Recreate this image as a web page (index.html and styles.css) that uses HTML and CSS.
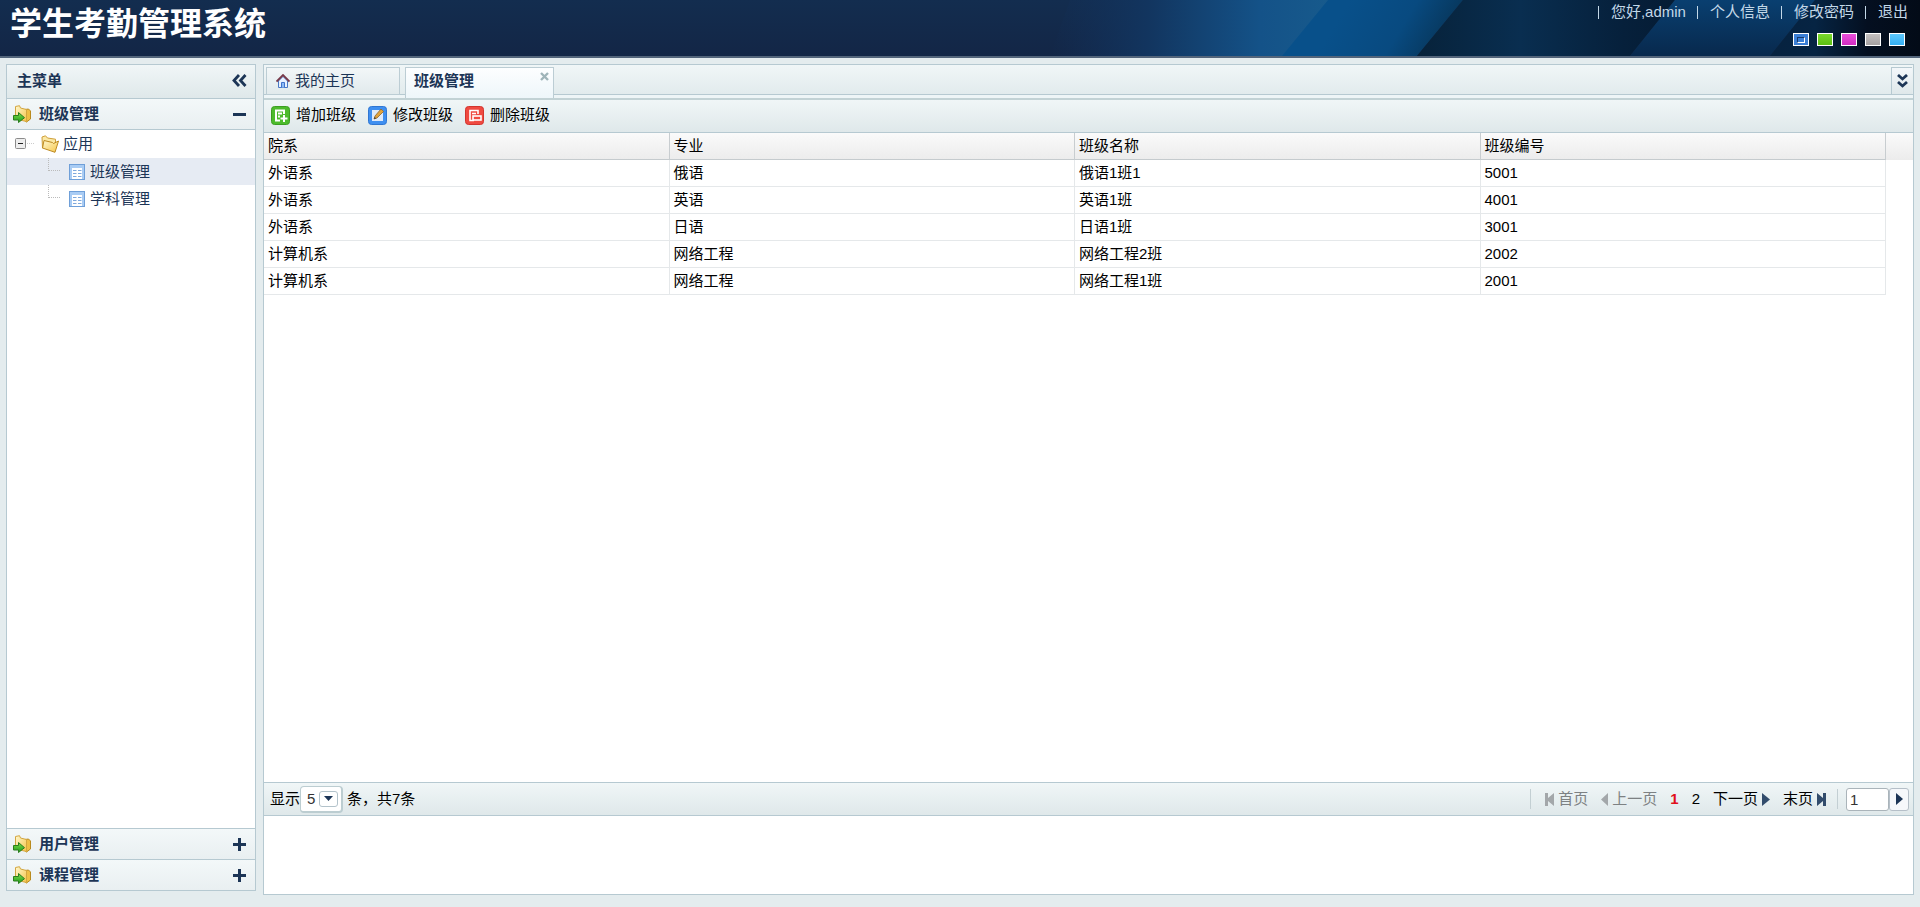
FILE: index.html
```html
<!DOCTYPE html>
<html lang="zh-CN">
<head>
<meta charset="utf-8">
<title>学生考勤管理系统</title>
<link rel="stylesheet" href="styles.css">
</head>
<body>
<svg class="sprite" aria-hidden="true">
  <defs>
    <linearGradient id="gold" x1="0" y1="0" x2="1" y2="1"><stop offset="0" stop-color="#fff8d0"/><stop offset="1" stop-color="#f6c64a"/></linearGradient>
    <linearGradient id="leaf" x1="0" y1="0" x2="0" y2="1"><stop offset="0" stop-color="#7ee04a"/><stop offset="1" stop-color="#1f9a1a"/></linearGradient>
    <symbol id="folder" viewBox="0 0 18 18">
      <path d="M1 2L4.500 .8L6.500 3L14.500 4.200V8L1.500 13Z" fill="#fbe9a6" stroke="#cf9f3a"/>
      <path d="M1.500 13L3 5.500L11.500 7.500L12.500 8.500L17.500 6L14 17.300Z" fill="url(#gold)" stroke="#bd8a22"/>
    </symbol>
    <symbol id="folder-go" viewBox="0 0 18 18">
      <path d="M12 4.500L15.500 4L17.500 6V14L13.500 17L11 15Z" fill="#f0bf45" stroke="#b98a1e"/>
      <path d="M2.500 1.500L6.500 .7L7.500 3L13.500 4.500V16.500L2.500 14Z" fill="url(#gold)" stroke="#d3a640"/>
      <path d="M.5 10.500H5.500V7.500L11.500 12.700L5.500 17.500V15H.5Z" fill="url(#leaf)" stroke="#2b7d1c"/>
    </symbol>
    <symbol id="grid" viewBox="0 0 16 16">
      <rect x=".5" y=".5" width="15" height="15" fill="#fff" stroke="#6f9fd8"/>
      <path d="M1 1H15V4H1ZM1 4H3V15H1ZM13 4H15V15H13Z" fill="#a9ccf4"/>
      <path d="M4 6.500H7.500M9 6.500H12.500M4 9.500H7.500M9 9.500H12.500M4 12.500H7.500M9 12.500H12.500" stroke="#7fa9dd"/>
    </symbol>
    <symbol id="plus" viewBox="0 0 13 13"><path d="M0 6.500H13M6.500 0V13" stroke="#1c3556" stroke-width="3"/></symbol>
  </defs>
</svg>

<header class="banner">
  <svg class="banner-art" viewBox="0 0 870 56" preserveAspectRatio="none" aria-hidden="true">
    <defs>
      <linearGradient id="b1"><stop offset="0" stop-color="#12305a" stop-opacity="0"/><stop offset=".35" stop-color="#12355f"/><stop offset=".75" stop-color="#145288"/><stop offset="1" stop-color="#175a8c"/></linearGradient>
      <linearGradient id="b2" gradientUnits="userSpaceOnUse" x1="300" y1="0" x2="400" y2="60"><stop offset="0" stop-color="#08508a"/><stop offset=".5" stop-color="#084a80"/><stop offset="1" stop-color="#07304f"/></linearGradient>
      <linearGradient id="b3"><stop offset="0" stop-color="#07223a"/><stop offset=".4" stop-color="#092e50"/><stop offset=".8" stop-color="#06203b"/><stop offset="1" stop-color="#051c34"/></linearGradient>
      <linearGradient id="b4" x1="0" y1="0" x2="0" y2="1"><stop offset="0" stop-color="#093f70"/><stop offset="1" stop-color="#08294d"/></linearGradient>
      <linearGradient id="b5"><stop offset="0" stop-color="#06223f"/><stop offset=".3" stop-color="#062443"/><stop offset=".65" stop-color="#040f20"/><stop offset="1" stop-color="#030b17"/></linearGradient>
    </defs>
    <path d="M20 0H280V56H0Z" fill="url(#b1)"/>
    <path d="M278 0H413L367 56H232Z" fill="url(#b2)"/>
    <path d="M413 0H625L580 56H367Z" fill="url(#b3)"/>
    <path d="M625 0H765L720 56H580Z" fill="url(#b4)"/>
    <path d="M765 0H870V56H720Z" fill="url(#b5)"/>
  </svg>
  <h1 class="banner-title">学生考勤管理系统</h1>
  <div class="banner-side">
    <nav class="links">
      <span>您好,admin</span>
      <a href="#">个人信息</a>
      <a href="#">修改密码</a>
      <a href="#">退出</a>
    </nav>
    <div class="skins">
      <button class="skin skin-blue" aria-label="蓝色"><i class="skin-mark"></i></button>
      <button class="skin skin-green" aria-label="绿色"></button>
      <button class="skin skin-pink" aria-label="粉色"></button>
      <button class="skin skin-gray" aria-label="灰色"></button>
      <button class="skin skin-sky" aria-label="天蓝"></button>
    </div>
  </div>
</header>

<div class="workspace">
  <aside class="sidebar">
    <div class="side-head">
      <h2>主菜单</h2>
      <button class="plain" aria-label="收起"><svg width="15" height="13" viewBox="0 0 15 13"><path d="M7 1L2 6.500L7 12M13.500 1L8.500 6.500L13.500 12" fill="none" stroke="#1c3556" stroke-width="2.800"/></svg></button>
    </div>
    <button class="fold fold-open"><svg class="i18"><use href="#folder-go"/></svg><span>班级管理</span><svg width="13" height="13" viewBox="0 0 13 13"><path d="M0 6.500H13" stroke="#1c3556" stroke-width="3"/></svg></button>
    <ul class="tree">
      <li class="node root">
        <svg class="branch-root" width="20" height="12" viewBox="0 0 20 12"><rect x=".5" y=".5" width="10" height="10" rx="1" fill="#eee" stroke="#8b8b8b"/><path d="M3 5.500H8" stroke="#222"/><path d="M12 5.500H20" stroke="#ccc" stroke-dasharray="1 1"/></svg>
        <svg class="i18"><use href="#folder"/></svg><span>应用</span>
      </li>
      <li class="node leaf selected">
        <svg class="elbow" width="12" height="27" viewBox="0 0 12 27"><path d="M.5 0V13M1 12.500H12" fill="none" stroke="#bbb" stroke-dasharray="1 1"/></svg>
        <svg class="i16"><use href="#grid"/></svg><a href="#">班级管理</a>
      </li>
      <li class="node leaf">
        <svg class="elbow" width="12" height="27" viewBox="0 0 12 27"><path d="M.5 0V13M1 12.500H12" fill="none" stroke="#bbb" stroke-dasharray="1 1"/></svg>
        <svg class="i16"><use href="#grid"/></svg><a href="#">学科管理</a>
      </li>
    </ul>
    <button class="fold"><svg class="i18"><use href="#folder-go"/></svg><span>用户管理</span><svg width="13" height="13"><use href="#plus"/></svg></button>
    <button class="fold"><svg class="i18"><use href="#folder-go"/></svg><span>课程管理</span><svg width="13" height="13"><use href="#plus"/></svg></button>
  </aside>

  <main class="content">
    <div class="tabs">
      <button class="tab">
        <svg width="14" height="14" viewBox="0 0 14 14"><path d="M2.500 7V13.500H11.500V7L7 2.500Z" fill="#e8f1ff" stroke="#4a78c4"/><path d="M5.500 13.500V8.500H8.500V13.500" fill="#8fbcf5" stroke="#3f73cc"/><path d="M.5 7.500L7 1L13.500 7.500" fill="none" stroke="#77394a" stroke-width="1.800"/></svg>
        我的主页
      </button>
      <div class="tab tab-active"><button class="tab-label">班级管理</button><button class="tab-close" aria-label="关闭"><svg width="9" height="9" viewBox="0 0 9 9"><path d="M1 1L8 8M8 1L1 8" stroke="#9fb4b9" stroke-width="2.400"/></svg></button></div>
      <button class="tab-more" aria-label="更多"><svg width="11" height="14" viewBox="0 0 11 14"><path d="M1 1L5.500 5L10 1M1 8L5.500 12L10 8" fill="none" stroke="#1c3556" stroke-width="2.800"/></svg></button>
    </div>
    <div class="toolbar">
      <button class="tool"><svg width="19" height="19" viewBox="0 0 19 19"><rect x=".5" y=".5" width="18" height="18" rx="3" fill="#4dbb2c" stroke="#3c9e22"/><path d="M13 8V4.500H5V14.500H9M7 7.500H11M7 10.500H9M13 9V16M9.500 12.500H16.500" fill="none" stroke="#fff" stroke-width="2"/></svg>增加班级</button>
      <button class="tool"><svg width="19" height="19" viewBox="0 0 19 19"><rect x=".5" y=".5" width="18" height="18" rx="3" fill="#3f8ff0" stroke="#2f76d2"/><rect x="4" y="4" width="11" height="11" fill="#dfeafa"/><path d="M6 13L7 10L13 3L15.500 5.500L9 12Z" fill="#e2a33c" stroke="#8a6530" stroke-width=".8"/><path d="M6 13L8 12.300L6.700 11Z" fill="#333"/></svg>修改班级</button>
      <button class="tool"><svg width="19" height="19" viewBox="0 0 19 19"><rect x=".5" y=".5" width="18" height="18" rx="3" fill="#ef4a41" stroke="#d2352e"/><path d="M13 8V4.500H5V14.500H9M7 7.500H11" fill="none" stroke="#fff" stroke-width="1.600"/><rect x="8" y="10" width="8" height="4" fill="#ef4a41" stroke="#fff" stroke-width="1.600"/></svg>删除班级</button>
    </div>
    <div class="grid-wrap">
      <table class="grid">
        <thead><tr><th>院系</th><th>专业</th><th>班级名称</th><th>班级编号</th></tr></thead>
        <tbody>
          <tr><td>外语系</td><td>俄语</td><td>俄语1班1</td><td>5001</td></tr>
          <tr><td>外语系</td><td>英语</td><td>英语1班</td><td>4001</td></tr>
          <tr><td>外语系</td><td>日语</td><td>日语1班</td><td>3001</td></tr>
          <tr><td>计算机系</td><td>网络工程</td><td>网络工程2班</td><td>2002</td></tr>
          <tr><td>计算机系</td><td>网络工程</td><td>网络工程1班</td><td>2001</td></tr>
        </tbody>
      </table>
    </div>
    <footer class="pager">
      <label for="size">显示</label>
      <span class="size-box">
        <select id="size"><option>5</option><option>10</option><option>20</option></select>
        <i class="size-arrow"><svg width="9" height="5" viewBox="0 0 9 5"><path d="M0 0H9L4.500 5Z" fill="#1c3556"/></svg></i>
      </span>
      <span class="total">条，共7条</span>
      <nav class="pages">
        <button class="page" disabled><svg width="9" height="13" viewBox="0 0 9 13"><path d="M0 0H3V5L9 0V13L3 8V13H0Z" fill="#a3a7aa"/></svg>首页</button>
        <button class="page" disabled><svg width="7" height="13" viewBox="0 0 7 13"><path d="M7 0V13L0 6.500Z" fill="#a3a7aa"/></svg>上一页</button>
        <button class="page current">1</button>
        <button class="page">2</button>
        <button class="page">下一页<svg width="8" height="13" viewBox="0 0 8 13"><path d="M0 0V13L8 6.500Z" fill="#324c6c"/></svg></button>
        <button class="page">末页<svg width="9" height="13" viewBox="0 0 9 13"><path d="M9 0H6V5L0 0V13L6 8V13H9Z" fill="#324c6c"/></svg></button>
      </nav>
      <div class="jump"><input type="text" value="1" aria-label="页码"><button aria-label="跳转"><svg width="7" height="12" viewBox="0 0 7 12"><path d="M0 0V12L7 6Z" fill="#1c3556"/></svg></button></div>
    </footer>
    <div class="blank"></div>
  </main>
</div>
</body>
</html>
```
FILE: styles.css
```css
* { box-sizing: border-box; }

html, body { height: 100%; }

body {
  margin: 0;
  display: flex;
  flex-direction: column;
  background: #e4ecee;
  color: #000;
  font: 15px/20px "Liberation Sans", "Noto Sans CJK SC", sans-serif;
}

button, input, select { font: inherit; color: inherit; margin: 0; }
button { padding: 0; border: 0; background: none; cursor: pointer; }
svg { flex: none; }
a { color: inherit; text-decoration: none; }

.sprite { position: absolute; width: 0; height: 0; }
.i18 { width: 18px; height: 18px; }
.i16 { width: 16px; height: 16px; }

/* Banner */
.banner {
  position: relative;
  flex: none;
  display: flex;
  justify-content: space-between;
  height: 58px;
  background: linear-gradient(#132d4f, #132646);
  border-bottom: 2px solid #53657b;
}
.banner-art { position: absolute; top: 0; right: 0; width: 870px; height: 56px; }
.banner-title {
  margin: 0;
  padding-left: 10px;
  color: #fff;
  font-size: 32px;
  line-height: 48px;
  font-weight: bold;
}
.banner-side {
  position: relative;
  display: flex;
  flex-direction: column;
  align-items: flex-end;
  gap: 11px;
  padding: 2px 12px 0 0;
}
.links { display: flex; color: #c3d8e8; }
.links > * { display: flex; align-items: center; }
.links > *::before {
  content: "";
  width: 1px;
  height: 13px;
  margin: 0 12px 0 11px;
  background: #c3d8e8;
}
.skins { display: flex; gap: 8px; padding-right: 3px; }
.skin { width: 16px; height: 13px; border: 1px solid #fff; }
.skin-blue { display: grid; place-items: center; background: #3b7fd6; }
.skin-mark { width: 8px; height: 6px; border: 1px solid #fff; border-top-color: #16396b; border-left-color: #16396b; background: #3b7fd6; }
.skin-green { background: linear-gradient(#7ad82c, #5bbf12); }
.skin-pink { background: linear-gradient(#ea4fdc, #d22cc2); }
.skin-gray { background: linear-gradient(#c4c0c0, #a5a1a1); }
.skin-sky { background: linear-gradient(#5cc8fd, #35aef2); }

/* Workspace */
.workspace {
  flex: 1;
  display: flex;
  gap: 7px;
  min-height: 0;
  padding: 6px 6px 12px;
}

/* Sidebar */
.sidebar {
  flex: none;
  display: flex;
  flex-direction: column;
  width: 250px;
  margin-bottom: 4px;
  border: 1px solid #b6c9d1;
  background: #fff;
  color: #1c3556;
}
.side-head {
  display: flex;
  align-items: center;
  justify-content: space-between;
  height: 34px;
  padding: 0 8px 2px 10px;
  border-bottom: 1px solid #b6c9d1;
  background: linear-gradient(#f0f6f7, #dfe8ea);
}
.side-head h2 { margin: 0; font-size: 15px; line-height: 20px; }
.plain { display: flex; }
.fold {
  display: flex;
  align-items: center;
  height: 31px;
  padding: 0 9px 0 6px;
  border-top: 1px solid #b6c9d1;
  background: linear-gradient(#f3f8f9, #e9eff1);
  font-weight: bold;
  text-align: left;
}
.fold span { flex: 1; padding-left: 8px; }
.fold-open { border-top: 0; border-bottom: 1px solid #b6c9d1; }
.tree { flex: 1; margin: 0; padding: 0; list-style: none; font-weight: normal; }
.node { display: flex; align-items: center; height: 27px; }
.root { height: 28px; padding-left: 8px; }
.root span { padding-left: 4px; }
.branch-root { margin-right: 6px; }
.leaf { padding-left: 41px; }
.elbow { margin-right: 9px; }
.leaf a { padding-left: 5px; }
.selected { background: #e6ebf3; }

/* Content */
.content {
  flex: 1;
  display: flex;
  flex-direction: column;
  min-width: 0;
  border: 1px solid #b6c9d1;
  background: #fff;
}
.tabs {
  display: flex;
  gap: 5px;
  height: 35px;
  padding: 2px 1px 0 2px;
  border-bottom: 2px solid #c2d2d5;
  background: linear-gradient(#f0f6f7, #e2ebed 29px, #b6c9d1 29px, #b6c9d1 30px, #eef5f7 30px);
}
.tab {
  display: flex;
  align-items: center;
  gap: 5px;
  width: 134px;
  height: 28px;
  padding-left: 9px;
  border: 1px solid #bccdd4;
  background: linear-gradient(#f2f7f8, #e1eaec);
  color: #1c3556;
}
.tab-active {
  width: 149px;
  height: 31px;
  padding: 0 0 5px 8px;
  border-bottom: 0;
  background: linear-gradient(#fdfeff, #eef6fa);
}
.tab-label { flex: 1; font-weight: bold; text-align: left; }
.tab-close { display: flex; align-self: flex-start; padding: 4px; }
.tab-more {
  display: grid;
  place-items: center;
  width: 21px;
  height: 28px;
  margin-left: auto;
  border: 1px solid #b6c9d1;
  border-width: 1px 0 1px 1px;
  background: linear-gradient(#f3f7fa, #dfe8ea);
}
.toolbar {
  display: flex;
  align-items: center;
  gap: 12px;
  height: 33px;
  padding: 0 0 2px 7px;
  border-bottom: 1px solid #b6c9d1;
  background: linear-gradient(#f0f6f7, #dfe8ea);
}
.tool { display: flex; align-items: center; gap: 6px; }

/* Table */
.grid-wrap {
  flex: 1;
  min-height: 0;
  padding-right: 27px;
  background: linear-gradient(#fafafa, #ececec) no-repeat 0 0 / 100% 27px;
}
.grid { width: 100%; table-layout: fixed; border-collapse: separate; border-spacing: 0; }
.grid th, .grid td {
  height: 27px;
  padding: 0 4px;
  border-right: 1px solid #e5e8ea;
  border-bottom: 1px solid #e5e8ea;
  text-align: left;
  font-weight: normal;
}
.grid th { border-right-color: #c8cdd0; border-bottom-color: #c5cbce; }

/* Pager */
.pager {
  display: flex;
  align-items: center;
  height: 34px;
  padding: 0 4px 0 6px;
  border: 1px solid #b6c9d1;
  border-width: 1px 0;
  background: linear-gradient(#f0f6f7, #dfe8ea);
}
.size-box { position: relative; }
.size-box select {
  display: block;
  appearance: none;
  width: 43px;
  height: 27px;
  padding: 0 0 0 6px;
  border: 2px solid #bccdd1;
  border-width: 1px 2px 2px 1px;
  border-radius: 4px;
  background: #fff;
  color: #333;
}
.size-arrow {
  position: absolute;
  top: 5px;
  right: 5px;
  display: grid;
  place-items: center;
  width: 19px;
  height: 16px;
  border: 1px solid #b3c3cb;
  border-radius: 3px;
  pointer-events: none;
}
.total { padding-left: 4px; }
.pages {
  display: flex;
  align-items: center;
  gap: 13px;
  margin-left: auto;
  padding: 0 11px 0 14px;
  border: 1px solid #c3cfd3;
  border-width: 0 1px;
}
.page { display: flex; align-items: center; gap: 4px; }
.page:disabled { color: #7d8183; }
.current { color: #e0101b; font-weight: bold; }
.jump { display: flex; padding-left: 8px; }
.jump input {
  width: 43px;
  height: 23px;
  padding: 0 3px;
  border: 1px solid #aab4ba;
  border-radius: 3px;
  background: #fff;
  color: #333;
}
.jump button {
  display: grid;
  place-items: center;
  width: 20px;
  height: 23px;
  border: 1px solid #b5bfc8;
  border-radius: 3px;
  background: #f6f8fb;
}
.blank { height: 78px; }
```
